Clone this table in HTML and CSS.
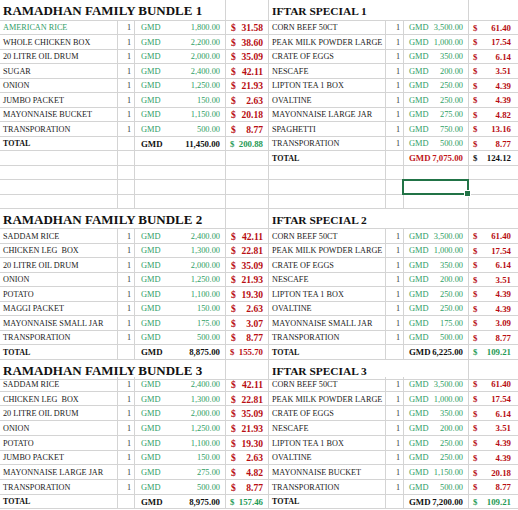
FILE: index.html
```html
<!DOCTYPE html>
<html>
<head>
<meta charset="utf-8">
<link rel="stylesheet" href="styles.css">
</head>
<body>
<div class="sheet">
  <div class="r tr1">
    <div class="c s3 ttl">RAMADHAN FAMILY BUNDLE 1</div><div class="c"></div>
    <div class="c s3 ttl ttr">IFTAR SPECIAL 1</div><div class="c"></div>
  </div>
  <div class="r"><div class="c n g">AMERICAN RICE</div><div class="c q">1</div><div class="c m"><span>GMD</span><span>1,800.00</span></div><div class="c d"><span>$</span><span>31.58</span></div><div class="c n">CORN BEEF 50CT</div><div class="c q">1</div><div class="c m mr"><span>GMD</span><span>3,500.00</span></div><div class="c d dr"><span>$</span><span>61.40</span></div></div>
  <div class="r"><div class="c n">WHOLE CHICKEN BOX</div><div class="c q">1</div><div class="c m"><span>GMD</span><span>2,200.00</span></div><div class="c d"><span>$</span><span>38.60</span></div><div class="c n">PEAK MILK POWDER LARGE</div><div class="c q">1</div><div class="c m mr"><span>GMD</span><span>1,000.00</span></div><div class="c d dr"><span>$</span><span>17.54</span></div></div>
  <div class="r"><div class="c n">20 LITRE OIL DRUM</div><div class="c q">1</div><div class="c m"><span>GMD</span><span>2,000.00</span></div><div class="c d"><span>$</span><span>35.09</span></div><div class="c n">CRATE OF EGGS</div><div class="c q">1</div><div class="c m mr"><span>GMD</span><span>350.00</span></div><div class="c d dr"><span>$</span><span>6.14</span></div></div>
  <div class="r"><div class="c n">SUGAR</div><div class="c q">1</div><div class="c m"><span>GMD</span><span>2,400.00</span></div><div class="c d"><span>$</span><span>42.11</span></div><div class="c n">NESCAFE</div><div class="c q">1</div><div class="c m mr"><span>GMD</span><span>200.00</span></div><div class="c d dr"><span>$</span><span>3.51</span></div></div>
  <div class="r"><div class="c n">ONION</div><div class="c q">1</div><div class="c m"><span>GMD</span><span>1,250.00</span></div><div class="c d"><span>$</span><span>21.93</span></div><div class="c n">LIPTON TEA 1 BOX</div><div class="c q">1</div><div class="c m mr"><span>GMD</span><span>250.00</span></div><div class="c d dr"><span>$</span><span>4.39</span></div></div>
  <div class="r"><div class="c n">JUMBO PACKET</div><div class="c q">1</div><div class="c m"><span>GMD</span><span>150.00</span></div><div class="c d"><span>$</span><span>2.63</span></div><div class="c n">OVALTINE</div><div class="c q">1</div><div class="c m mr"><span>GMD</span><span>250.00</span></div><div class="c d dr"><span>$</span><span>4.39</span></div></div>
  <div class="r"><div class="c n">MAYONNAISE BUCKET</div><div class="c q">1</div><div class="c m"><span>GMD</span><span>1,150.00</span></div><div class="c d"><span>$</span><span>20.18</span></div><div class="c n">MAYONNAISE LARGE JAR</div><div class="c q">1</div><div class="c m mr"><span>GMD</span><span>275.00</span></div><div class="c d dr"><span>$</span><span>4.82</span></div></div>
  <div class="r"><div class="c n">TRANSPORATION</div><div class="c q">1</div><div class="c m"><span>GMD</span><span>500.00</span></div><div class="c d"><span>$</span><span>8.77</span></div><div class="c n">SPAGHETTI</div><div class="c q">1</div><div class="c m mr"><span>GMD</span><span>750.00</span></div><div class="c d dr"><span>$</span><span>13.16</span></div></div>
  <div class="r"><div class="c n b">TOTAL</div><div class="c"></div><div class="c m b k"><span>GMD</span><span>11,450.00</span></div><div class="c d dt gr"><span>$</span><span>200.88</span></div><div class="c n">TRANSPORATION</div><div class="c q">1</div><div class="c m mr"><span>GMD</span><span>500.00</span></div><div class="c d dr"><span>$</span><span>8.77</span></div></div>
  <div class="r"><div class="c"></div><div class="c"></div><div class="c"></div><div class="c"></div><div class="c n b">TOTAL</div><div class="c"></div><div class="c m mr b rd"><span>GMD</span><span>7,075.00</span></div><div class="c d dr k"><span>$</span><span>124.12</span></div></div>
  <div class="r blank"><div class="c"></div><div class="c"></div><div class="c"></div><div class="c"></div><div class="c"></div><div class="c"></div><div class="c"></div><div class="c"></div></div>
  <div class="r blank"><div class="c"></div><div class="c"></div><div class="c"></div><div class="c"></div><div class="c"></div><div class="c"></div><div class="c sel"></div><div class="c"></div></div>
  <div class="r blank"><div class="c"></div><div class="c"></div><div class="c"></div><div class="c"></div><div class="c"></div><div class="c"></div><div class="c"></div><div class="c"></div></div>

  <div class="r tr2">
    <div class="c s3 ttl">RAMADHAN FAMILY BUNDLE 2</div><div class="c"></div>
    <div class="c s3 ttl ttr">IFTAR SPECIAL 2</div><div class="c"></div>
  </div>
  <div class="r"><div class="c n">SADDAM RICE</div><div class="c q">1</div><div class="c m"><span>GMD</span><span>2,400.00</span></div><div class="c d"><span>$</span><span>42.11</span></div><div class="c n">CORN BEEF 50CT</div><div class="c q">1</div><div class="c m mr"><span>GMD</span><span>3,500.00</span></div><div class="c d dr"><span>$</span><span>61.40</span></div></div>
  <div class="r"><div class="c n">CHICKEN LEG&nbsp; BOX</div><div class="c q">1</div><div class="c m"><span>GMD</span><span>1,300.00</span></div><div class="c d"><span>$</span><span>22.81</span></div><div class="c n">PEAK MILK POWDER LARGE</div><div class="c q">1</div><div class="c m mr"><span>GMD</span><span>1,000.00</span></div><div class="c d dr"><span>$</span><span>17.54</span></div></div>
  <div class="r"><div class="c n">20 LITRE OIL DRUM</div><div class="c q">1</div><div class="c m"><span>GMD</span><span>2,000.00</span></div><div class="c d"><span>$</span><span>35.09</span></div><div class="c n">CRATE OF EGGS</div><div class="c q">1</div><div class="c m mr"><span>GMD</span><span>350.00</span></div><div class="c d dr"><span>$</span><span>6.14</span></div></div>
  <div class="r"><div class="c n">ONION</div><div class="c q">1</div><div class="c m"><span>GMD</span><span>1,250.00</span></div><div class="c d"><span>$</span><span>21.93</span></div><div class="c n">NESCAFE</div><div class="c q">1</div><div class="c m mr"><span>GMD</span><span>200.00</span></div><div class="c d dr"><span>$</span><span>3.51</span></div></div>
  <div class="r"><div class="c n">POTATO</div><div class="c q">1</div><div class="c m"><span>GMD</span><span>1,100.00</span></div><div class="c d"><span>$</span><span>19.30</span></div><div class="c n">LIPTON TEA 1 BOX</div><div class="c q">1</div><div class="c m mr"><span>GMD</span><span>250.00</span></div><div class="c d dr"><span>$</span><span>4.39</span></div></div>
  <div class="r"><div class="c n">MAGGI PACKET</div><div class="c q">1</div><div class="c m"><span>GMD</span><span>150.00</span></div><div class="c d"><span>$</span><span>2.63</span></div><div class="c n">OVALTINE</div><div class="c q">1</div><div class="c m mr"><span>GMD</span><span>250.00</span></div><div class="c d dr"><span>$</span><span>4.39</span></div></div>
  <div class="r"><div class="c n">MAYONNAISE SMALL JAR</div><div class="c q">1</div><div class="c m"><span>GMD</span><span>175.00</span></div><div class="c d"><span>$</span><span>3.07</span></div><div class="c n">MAYONNAISE SMALL JAR</div><div class="c q">1</div><div class="c m mr"><span>GMD</span><span>175.00</span></div><div class="c d dr"><span>$</span><span>3.09</span></div></div>
  <div class="r"><div class="c n">TRANSPORATION</div><div class="c q">1</div><div class="c m"><span>GMD</span><span>500.00</span></div><div class="c d"><span>$</span><span>8.77</span></div><div class="c n">TRANSPORATION</div><div class="c q">1</div><div class="c m mr"><span>GMD</span><span>500.00</span></div><div class="c d dr"><span>$</span><span>8.77</span></div></div>
  <div class="r"><div class="c n b">TOTAL</div><div class="c"></div><div class="c m b k"><span>GMD</span><span>8,875.00</span></div><div class="c d dt"><span>$</span><span>155.70</span></div><div class="c n b">TOTAL</div><div class="c"></div><div class="c m mr b k"><span>GMD</span><span>6,225.00</span></div><div class="c d dr gr"><span>$</span><span>109.21</span></div></div>

  <div class="r tr3">
    <div class="c s3 ttl">RAMADHAN FAMILY BUNDLE 3</div><div class="c"></div>
    <div class="c s3 ttl ttr">IFTAR SPECIAL 3</div><div class="c"></div>
  </div>
  <div class="r r3"><div class="c n">SADDAM RICE</div><div class="c q">1</div><div class="c m"><span>GMD</span><span>2,400.00</span></div><div class="c d"><span>$</span><span>42.11</span></div><div class="c n">CORN BEEF 50CT</div><div class="c q">1</div><div class="c m mr"><span>GMD</span><span>3,500.00</span></div><div class="c d dr"><span>$</span><span>61.40</span></div></div>
  <div class="r r3"><div class="c n">CHICKEN LEG&nbsp; BOX</div><div class="c q">1</div><div class="c m"><span>GMD</span><span>1,300.00</span></div><div class="c d"><span>$</span><span>22.81</span></div><div class="c n">PEAK MILK POWDER LARGE</div><div class="c q">1</div><div class="c m mr"><span>GMD</span><span>1,000.00</span></div><div class="c d dr"><span>$</span><span>17.54</span></div></div>
  <div class="r r3"><div class="c n">20 LITRE OIL DRUM</div><div class="c q">1</div><div class="c m"><span>GMD</span><span>2,000.00</span></div><div class="c d"><span>$</span><span>35.09</span></div><div class="c n">CRATE OF EGGS</div><div class="c q">1</div><div class="c m mr"><span>GMD</span><span>350.00</span></div><div class="c d dr"><span>$</span><span>6.14</span></div></div>
  <div class="r r3"><div class="c n">ONION</div><div class="c q">1</div><div class="c m"><span>GMD</span><span>1,250.00</span></div><div class="c d"><span>$</span><span>21.93</span></div><div class="c n">NESCAFE</div><div class="c q">1</div><div class="c m mr"><span>GMD</span><span>200.00</span></div><div class="c d dr"><span>$</span><span>3.51</span></div></div>
  <div class="r r3"><div class="c n">POTATO</div><div class="c q">1</div><div class="c m"><span>GMD</span><span>1,100.00</span></div><div class="c d"><span>$</span><span>19.30</span></div><div class="c n">LIPTON TEA 1 BOX</div><div class="c q">1</div><div class="c m mr"><span>GMD</span><span>250.00</span></div><div class="c d dr"><span>$</span><span>4.39</span></div></div>
  <div class="r r3"><div class="c n">JUMBO PACKET</div><div class="c q">1</div><div class="c m"><span>GMD</span><span>150.00</span></div><div class="c d"><span>$</span><span>2.63</span></div><div class="c n">OVALTINE</div><div class="c q">1</div><div class="c m mr"><span>GMD</span><span>250.00</span></div><div class="c d dr"><span>$</span><span>4.39</span></div></div>
  <div class="r r3"><div class="c n">MAYONNAISE LARGE JAR</div><div class="c q">1</div><div class="c m"><span>GMD</span><span>275.00</span></div><div class="c d"><span>$</span><span>4.82</span></div><div class="c n">MAYONNAISE BUCKET</div><div class="c q">1</div><div class="c m mr"><span>GMD</span><span>1,150.00</span></div><div class="c d dr"><span>$</span><span>20.18</span></div></div>
  <div class="r r3"><div class="c n">TRANSPORATION</div><div class="c q">1</div><div class="c m"><span>GMD</span><span>500.00</span></div><div class="c d"><span>$</span><span>8.77</span></div><div class="c n">TRANSPORATION</div><div class="c q">1</div><div class="c m mr"><span>GMD</span><span>500.00</span></div><div class="c d dr"><span>$</span><span>8.77</span></div></div>
  <div class="r r3"><div class="c n b">TOTAL</div><div class="c"></div><div class="c m b k"><span>GMD</span><span>8,975.00</span></div><div class="c d dt gr"><span>$</span><span>157.46</span></div><div class="c n b">TOTAL</div><div class="c"></div><div class="c m mr b k"><span>GMD</span><span>7,200.00</span></div><div class="c d dr gr"><span>$</span><span>109.21</span></div></div>
</div>
</body>
</html>
```

FILE: styles.css
```css
* { box-sizing: border-box; }
html, body { margin: 0; padding: 0; background: #fff; }
body {
  width: 518px;
  height: 510px;
  overflow: hidden;
  font-family: "Liberation Serif", "Times New Roman", serif;
}
.sheet { display: flex; flex-direction: column; width: 518px; }
.r {
  display: grid;
  grid-template-columns: 118px 17px 91px 43px 117px 18px 65px 49px;
  height: 14.5px;
}
.tr1 { height: 20.7px; }
.tr2 { height: 20px; }
.tr3 { height: 17.4px; }
.r3 { height: 14.7px; }
.c {
  border-right: 1px solid #d4d4d4;
  border-bottom: 1px solid #d4d4d4;
  display: flex;
  align-items: center;
  padding-top: 1px;
  font-size: 8.2px;
  color: #222;
  white-space: nowrap;
  min-width: 0;
}
.r > .c:last-child { border-right: none; }
.s3 { grid-column: span 3; }
.ttl {
  font-size: 13px;
  font-weight: bold;
  color: #111;
  padding-left: 3px;
  padding-top: 3px;
}
.ttr { font-size: 11.4px; }
.n { padding-left: 3px; }
.g { color: #2f9e66; }
.q { justify-content: flex-end; padding-right: 3px; color: #333; }
.m {
  justify-content: space-between;
  padding: 1px 5px 0 6px;
  color: #2f9e66;
  font-size: 8.4px;
}
.mr { padding-left: 5px; }
.d {
  justify-content: space-between;
  padding: 1px 5px 0 5px;
  color: #b80d12;
  font-weight: bold;
  font-size: 9.6px;
}
.dt { font-size: 8.8px; padding-left: 4px; }
.dr { font-size: 8.8px; padding-left: 4px; padding-right: 7px; }
.b { font-weight: bold; color: #111; }
.n.b { font-size: 8px; }
.m.b { font-size: 8.8px; }
.k { color: #111; }
.rd { color: #c0141a; }
.gr { color: #1f9a55; }
.sel { position: relative; }
.sel::after {
  content: "";
  position: absolute;
  left: -2px;
  top: -1px;
  right: -1px;
  bottom: -1px;
  border: 2px solid #217346;
}
.sel::before {
  content: "";
  position: absolute;
  right: -3px;
  bottom: -3px;
  width: 5px;
  height: 5px;
  background: #217346;
  border: 1px solid #fff;
  z-index: 2;
}
```
